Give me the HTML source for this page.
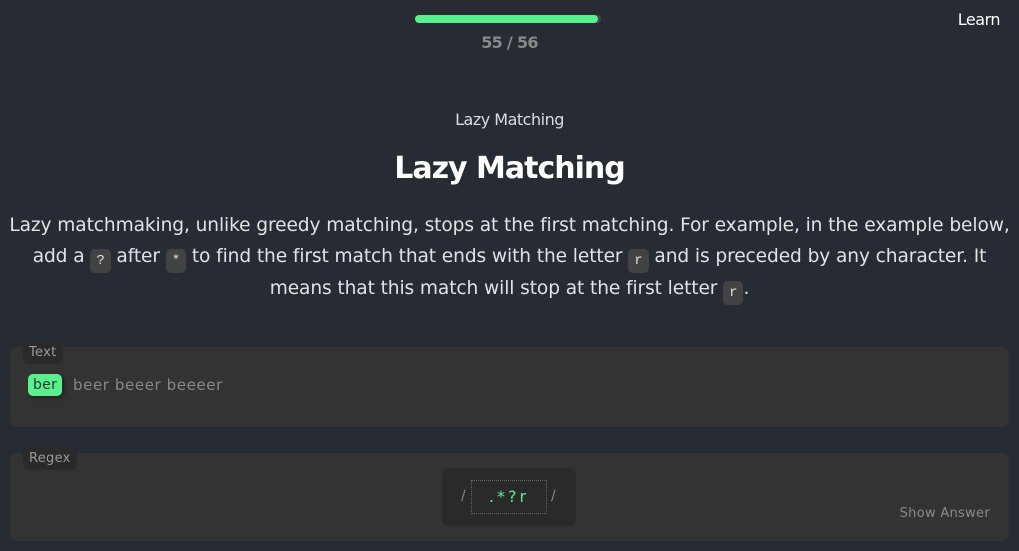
<!DOCTYPE html>
<html><head><meta charset="utf-8"><style>
*{margin:0;padding:0;box-sizing:border-box}
body{width:1019px;height:551px;background:#272b34;font-family:"DejaVu Sans","Liberation Sans",sans-serif;color:#e6e6e6;position:relative;overflow:hidden}
.bar{position:absolute;left:415px;top:15px;width:186px;height:8px;background:#444;border-radius:4px}
.bar i{display:block;width:183px;height:8px;background:#5af08f;border-radius:4px}
.cnt{position:absolute;left:400px;width:219px;top:33px;text-align:center;font-size:16px;font-weight:bold;color:#8a8a8a;letter-spacing:-0.7px}
.learn{position:absolute;right:19px;top:10px;font-size:16px;color:#fff;letter-spacing:-0.5px}
.sub{position:absolute;top:110px;width:100%;text-align:center;font-size:16px;color:#ddd;letter-spacing:-0.5px}
h1{position:absolute;top:151px;width:100%;text-align:center;font-size:30px;font-weight:bold;color:#fff;letter-spacing:-1px}
p{position:absolute;top:210px;left:0;width:1019px;text-align:center;font-size:18.6px;line-height:31px;color:#e2e2e2;letter-spacing:-0.1px;white-space:nowrap}
code{display:inline-block;background:#434343;border-radius:5px;font-family:"Liberation Mono",monospace;font-size:14px;padding:0 6px;line-height:24px;vertical-align:-2px;color:#ddd}
.panel{position:absolute;left:10px;width:999px;background:#333333;border-radius:7px}
.lbl{position:absolute;left:13px;top:-6px;background:#2a2a2a;border-radius:6px;font-size:13px;color:#999;padding:4px 6px;letter-spacing:0.3px}
.match{position:absolute;left:18px;top:27px;background:#5af08f;color:#1f3a28;border-radius:5px;padding:3px 5px;font-size:14px;letter-spacing:0.3px;box-shadow:2px 2px 4px rgba(0,0,0,.35)}
.rest{position:absolute;left:63px;top:29px;font-size:15px;color:#888;letter-spacing:0.6px}
.rx{position:absolute;left:432px;top:15px;width:134px;height:58px;background:#2a2a2a;border-radius:6px}
.rx .s{position:absolute;top:20px;color:#888;font-size:14px}
.rx .in{position:absolute;left:29px;top:12px;width:76px;height:34px;border:1px dotted #666;color:#5af08f;font-family:"DejaVu Sans",sans-serif;font-size:16px;text-align:center;line-height:32px;letter-spacing:3px}
.sa{position:absolute;right:19px;top:53px;font-size:13px;color:#8a8a8a;letter-spacing:0.3px}
</style></head><body>
<div class="bar"><i></i></div>
<div class="cnt">55 / 56</div>
<div class="learn">Learn</div>
<div class="sub">Lazy Matching</div>
<h1>Lazy Matching</h1>
<p>Lazy matchmaking, unlike greedy matching, stops at the first matching. For example, in the example below,<br>add a <code>?</code> after <code>*</code> to find the first match that ends with the letter <code>r</code> and is preceded by any character. It<br>means that this match will stop at the first letter <code>r</code>.</p>
<div class="panel" style="top:347px;height:80px"><div class="lbl">Text</div><div class="match">ber</div><div class="rest">beer beeer beeeer</div></div>
<div class="panel" style="top:453px;height:88px"><div class="lbl">Regex</div>
<div class="rx"><span class="s" style="left:19px">/</span><div class="in">.*?r</div><span class="s" style="left:109px">/</span></div>
<div class="sa">Show Answer</div></div>
</body></html>
